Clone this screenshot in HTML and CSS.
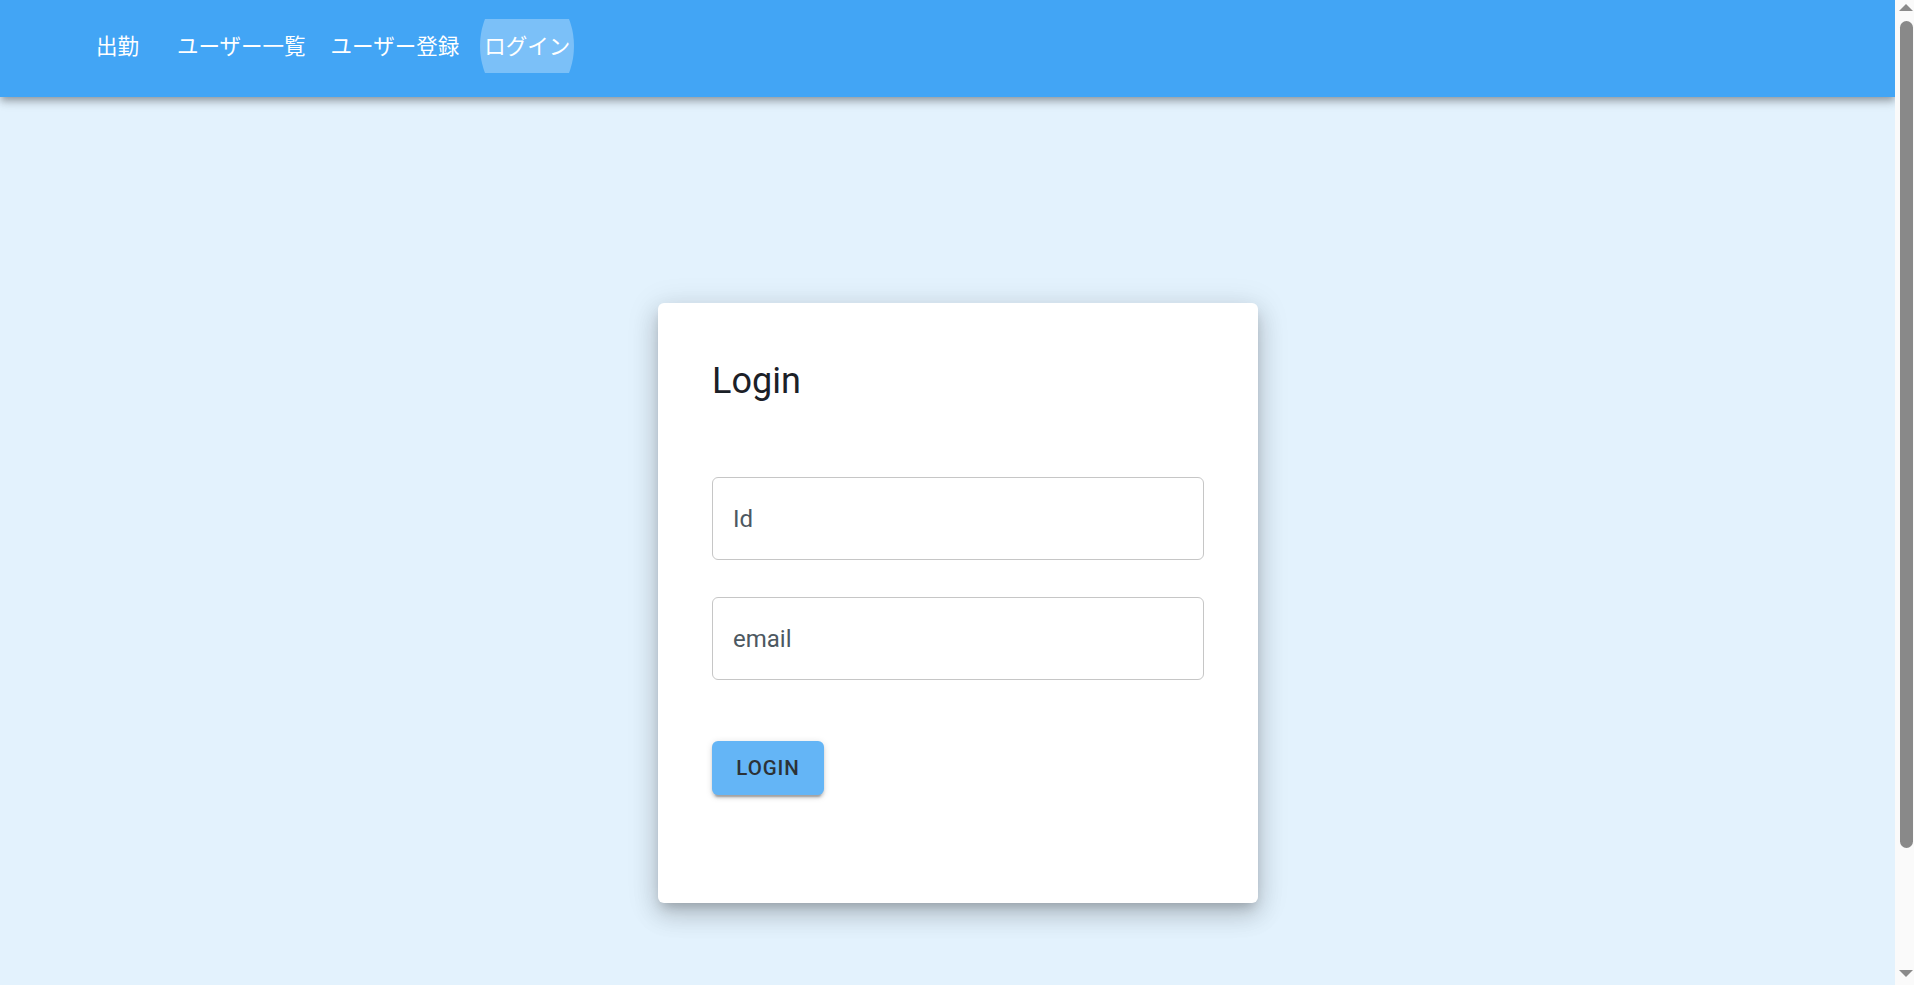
FILE: index.html
```html
<!DOCTYPE html>
<html lang="ja">
<head>
<meta charset="utf-8">
<title>Login</title>
<link rel="stylesheet" href="styles.css">
</head>
<body>
<div class="page">
  <header class="app-bar">
    <nav class="nav">
      <a class="nav-item nav-item-first">出勤</a>
      <a class="nav-item">ユーザー一覧</a>
      <a class="nav-item">ユーザー登録</a>
      <a class="nav-item active"><span class="nav-label">ログイン</span></a>
    </nav>
  </header>
  <main class="main">
    <section class="card">
      <h1 class="card-title">Login</h1>
      <div class="field field-first"><span class="field-label">Id</span></div>
      <div class="field field-second"><span class="field-label">email</span></div>
      <button class="btn-login" type="button">LOGIN</button>
    </section>
  </main>
</div>
<div class="scrollbar" aria-hidden="true">
  <div class="sb-btn sb-btn-up"><span class="sb-arrow sb-arrow-up"></span></div>
  <div class="sb-track"><div class="sb-thumb"></div></div>
  <div class="sb-btn sb-btn-down"><span class="sb-arrow sb-arrow-down"></span></div>
</div>
</body>
</html>
```

FILE: styles.css
```css
html {
  overflow: hidden;
  background: #e3f2fd;
}

body {
  margin: 0;
  height: 100vh;
  display: flex;
  overflow: hidden;
  background: #e3f2fd;
  font-family: Roboto, "Noto Sans", "Noto Sans CJK JP", sans-serif;
}

.page {
  flex: 1;
  min-width: 0;
  height: 100vh;
  overflow: hidden;
}

/* fake classic scrollbar */
.scrollbar {
  width: 19px;
  flex: none;
  height: 100vh;
  background: #fafafa;
  display: flex;
  flex-direction: column;
}

.sb-btn {
  height: 17px;
  flex: none;
  display: flex;
  justify-content: center;
  padding-left: 2px;
  box-sizing: border-box;
}

.sb-btn-up {
  align-items: flex-start;
  padding-top: 4px;
}

.sb-btn-down {
  align-items: flex-start;
  padding-top: 2px;
}

.sb-arrow {
  width: 0;
  height: 0;
  border-left: 7px solid transparent;
  border-right: 7px solid transparent;
}

.sb-arrow-up {
  border-bottom: 7px solid #8a8a8a;
}

.sb-arrow-down {
  border-top: 7px solid #8a8a8a;
}

.sb-track {
  flex: 1;
  padding: 4px 1px 0 5px;
}

.sb-thumb {
  height: 827px;
  background: #898989;
  border-radius: 7px;
}

.app-bar {
  height: 97px;
  background: #42a5f5;
  box-shadow: 0 3px 6px -1.5px rgba(0, 0, 0, 0.2),
              0 6px 7.5px 0 rgba(0, 0, 0, 0.14),
              0 1.5px 15px 0 rgba(0, 0, 0, 0.12);
  position: relative;
  z-index: 2;
}

.nav {
  display: flex;
  align-items: flex-start;
  gap: 17px;
  padding: 19px 0 0 92px;
}

.nav-item {
  position: relative;
  display: flex;
  align-items: center;
  height: 54px;
  padding: 0 4px 2px;
  box-sizing: border-box;
  overflow: hidden;
  color: #ffffff;
  font-family: "Noto Sans CJK JP", sans-serif;
  font-size: 21.5px;
  line-height: 1;
  white-space: nowrap;
  cursor: pointer;
}

.nav-item-first {
  min-width: 64px;
}

.nav-item.active::before {
  content: "";
  position: absolute;
  left: 0;
  right: 0;
  top: -33px;
  height: 120px;
  border-radius: 50%;
  background: rgba(255, 255, 255, 0.3);
}

.nav-label {
  position: relative;
}

.main {
  display: flex;
  justify-content: center;
  padding: 206px 0 0 21px;
}

.card {
  box-sizing: border-box;
  width: 600px;
  height: 600px;
  padding: 54px;
  background: #ffffff;
  border-radius: 6px;
  box-shadow: 0 7px 12px -4px rgba(0, 0, 0, 0.2),
              0 12px 25px 2px rgba(0, 0, 0, 0.12),
              0 5px 30px 4px rgba(0, 0, 0, 0.1);
  display: flex;
  flex-direction: column;
  align-items: flex-start;
}

.card-title {
  margin: 0;
  font-family: Roboto, sans-serif;
  font-weight: 400;
  font-size: 36px;
  line-height: 48px;
  color: #1b2027;
}

.field {
  box-sizing: border-box;
  width: 100%;
  height: 83px;
  border: 1px solid #c6c6c6;
  border-radius: 6px;
  display: flex;
  align-items: center;
  padding-left: 20px;
}

.field-first {
  margin-top: 72px;
}

.field-second {
  margin-top: 37px;
}

.field-label {
  font-family: Roboto, sans-serif;
  font-size: 24px;
  color: #4d5861;
}

.btn-login {
  margin-top: 61px;
  width: 112px;
  height: 54px;
  padding: 0;
  border: none;
  border-radius: 6px;
  background: #64b5f6;
  color: #2c3237;
  font-family: Roboto, sans-serif;
  font-weight: 500;
  font-size: 20.5px;
  letter-spacing: 0.9px;
  box-shadow: 0 4.5px 1.5px -3px rgba(0, 0, 0, 0.2),
              0 3px 3px 0 rgba(0, 0, 0, 0.14),
              0 1.5px 7.5px 0 rgba(0, 0, 0, 0.12);
  cursor: pointer;
}
```
